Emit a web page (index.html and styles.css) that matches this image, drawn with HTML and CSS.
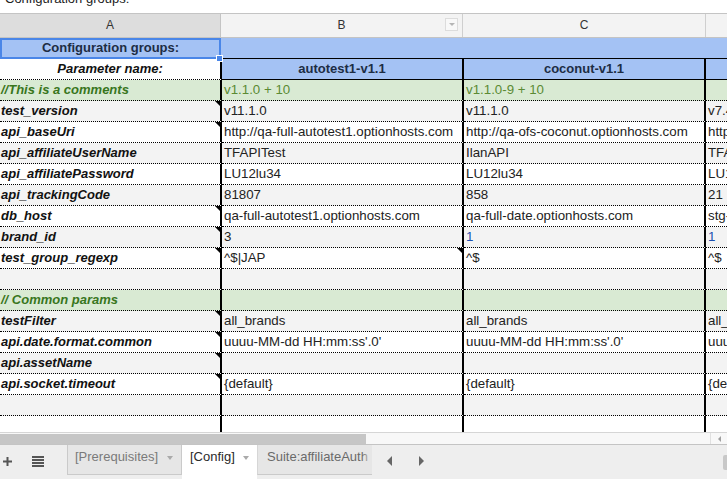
FILE: index.html
```html
<!DOCTYPE html>
<html>
<head>
<meta charset="utf-8">
<link rel="stylesheet" href="styles.css">
</head>
<body>
<div class="formula"><span>Configuration groups:</span></div>
<div class="colhead">
  <div class="ch ch-sel">A</div>
  <div class="ch">B<span class="filter"><span class="caret"></span></span></div>
  <div class="ch">C</div>
  <div class="ch ch-last"></div>
</div>
<div class="grid">
  <div class="c a blue sel bold center">Configuration groups:<span class="handle"></span></div>
  <div class="c blue span3 toprow"></div>

  <div class="c a white bi center">Parameter name:</div>
  <div class="c b blue bold center hdr">autotest1-v1.1</div>
  <div class="c b blue bold center hdr">coconut-v1.1</div>
  <div class="c d blue hdr"></div>

  <div class="c a green bi gtext">//This is a comments</div>
  <div class="c b green gval">v1.1.0 + 10</div>
  <div class="c b green gval">v1.1.0-9 + 10</div>
  <div class="c d green"></div>

  <div class="c a gray bi note">test_version</div>
  <div class="c b gray">v11.1.0</div>
  <div class="c b gray">v11.1.0</div>
  <div class="c d gray">v7.4.0</div>

  <div class="c a white bi note">api_baseUri</div>
  <div class="c b white">http://qa-full-autotest1.optionhosts.com</div>
  <div class="c b white">http://qa-ofs-coconut.optionhosts.com</div>
  <div class="c d white">http://stg.optionhosts.com</div>

  <div class="c a gray bi">api_affiliateUserName</div>
  <div class="c b gray">TFAPITest</div>
  <div class="c b gray">IlanAPI</div>
  <div class="c d gray">TFAPITest</div>

  <div class="c a white bi">api_affiliatePassword</div>
  <div class="c b white">LU12lu34</div>
  <div class="c b white">LU12lu34</div>
  <div class="c d white">LU12lu34</div>

  <div class="c a gray bi">api_trackingCode</div>
  <div class="c b gray">81807</div>
  <div class="c b gray">858</div>
  <div class="c d gray">21</div>

  <div class="c a white bi note">db_host</div>
  <div class="c b white">qa-full-autotest1.optionhosts.com</div>
  <div class="c b white">qa-full-date.optionhosts.com</div>
  <div class="c d white">stg-full.optionhosts.com</div>

  <div class="c a gray bi note">brand_id</div>
  <div class="c b gray">3</div>
  <div class="c b gray num">1</div>
  <div class="c d gray num">1</div>

  <div class="c a white bi note">test_group_regexp</div>
  <div class="c b white note">^$|JAP</div>
  <div class="c b white">^$</div>
  <div class="c d white">^$</div>

  <div class="c a gray"></div>
  <div class="c b gray"></div>
  <div class="c b gray"></div>
  <div class="c d gray"></div>

  <div class="c a green bi gtext">// Common params</div>
  <div class="c b green"></div>
  <div class="c b green"></div>
  <div class="c d green"></div>

  <div class="c a gray bi note">testFilter</div>
  <div class="c b gray">all_brands</div>
  <div class="c b gray">all_brands</div>
  <div class="c d gray">all_brands</div>

  <div class="c a white bi note">api.date.format.common</div>
  <div class="c b white">uuuu-MM-dd HH:mm:ss'.0'</div>
  <div class="c b white">uuuu-MM-dd HH:mm:ss'.0'</div>
  <div class="c d white">uuuu-MM-dd HH:mm:ss'.0'</div>

  <div class="c a gray bi note">api.assetName</div>
  <div class="c b gray"></div>
  <div class="c b gray"></div>
  <div class="c d gray"></div>

  <div class="c a white bi note">api.socket.timeout</div>
  <div class="c b white">{default}</div>
  <div class="c b white">{default}</div>
  <div class="c d white">{default}</div>

  <div class="c a gray"></div>
  <div class="c b gray"></div>
  <div class="c b gray"></div>
  <div class="c d gray"></div>

  <div class="c a white"></div>
  <div class="c b white"></div>
  <div class="c b white"></div>
  <div class="c d white"></div>
</div>
<div class="hscroll">
  <div class="thumb"></div>
  <div class="hs-end"><span class="hs-arrow"></span></div>
</div>
<div class="tabbar">
  <svg class="ic-plus" width="9" height="9" viewBox="0 0 9 9"><rect x="0" y="3.5" width="9" height="2" fill="#555"/><rect x="3.5" y="0" width="2" height="9" fill="#555"/></svg>
  <svg class="ic-menu" width="12" height="11" viewBox="0 0 12 11"><rect x="0" y="0" width="12" height="2" fill="#555"/><rect x="0" y="3" width="12" height="2" fill="#555"/><rect x="0" y="6" width="12" height="2" fill="#555"/><rect x="0" y="9" width="12" height="2" fill="#555"/></svg>
  <div class="tab tab-prereq">[Prerequisites]<span class="tcaret"></span></div>
  <div class="tab tab-active">[Config]<span class="tcaret"></span></div>
  <div class="tab tab-suite"><span class="tlabel">Suite:affiliateAuth</span><span class="fade"></span></div>
  <span class="arr arr-l"></span>
  <span class="arr arr-r"></span>
  <span class="spacer"></span>
  <span class="edge"></span>
</div>
</body>
</html>
```

FILE: styles.css
```css
html, body {
  margin: 0;
  padding: 0;
}
body {
  width: 727px;
  height: 479px;
  overflow: hidden;
  background: #fff;
  font-family: "Liberation Sans", Arial, sans-serif;
  font-size: 13px;
  color: #222;
}

.formula {
  height: 13px;
  border-bottom: 1px solid #c4c4c4;
  overflow: hidden;
  padding-left: 5px;
}
.formula span {
  display: block;
  margin-top: -8px;
  line-height: 13px;
  font-size: 13px;
  color: #222;
}

.colhead {
  display: grid;
  grid-template-columns: 221px 242px 243px 1fr;
  height: 23px;
  border-bottom: 1px solid #c4c4c4;
}
.ch {
  background: #f3f3f3;
  border-right: 1px solid #cfcfcf;
  text-align: center;
  line-height: 23px;
  font-size: 12px;
  color: #333;
  position: relative;
}
.ch-sel {
  background: #dddddd;
  border-right-color: #c4c4c4;
}
.ch-last {
  border-right: none;
}
.filter {
  position: absolute;
  right: 4px;
  top: 4px;
  width: 11px;
  height: 11px;
  border: 1px solid #dcdcdc;
  background: #f8f8f8;
  display: flex;
  align-items: center;
  justify-content: center;
}
.caret {
  width: 0;
  height: 0;
  border-left: 3px solid transparent;
  border-right: 3px solid transparent;
  border-top: 3px solid #b5b5b5;
}

.grid {
  display: grid;
  grid-template-columns: 222px 242px 242px 1fr;
  grid-auto-rows: 21px;
  height: 394px;
  overflow: hidden;
}
.c {
  box-sizing: border-box;
  height: 21px;
  border-bottom: 1px dotted #000;
  line-height: 20px;
  padding-left: 2px;
  white-space: nowrap;
  overflow: hidden;
  position: relative;
}
.a {
  border-right: 2px solid #000;
  padding-left: 1px;
}
.b {
  border-right: 2px solid #000;
  font-size: 13.3px;
}
.d {
  padding-left: 2px;
  font-size: 13.3px;
}
.white { background: #fff; }
.gray { background: #f3f3f3; }
.green { background: #d9ead3; }
.blue { background: #a4c2f4; }
.bold { font-weight: bold; font-size: 13px; }
.bi { font-weight: bold; font-style: italic; color: #111; }
.center { text-align: center; padding-left: 0; }
.gtext { color: #38761d; }
.gval { color: #5b8a34; }
.num { color: #1c4fb0; }

.sel {
  border-right: none;
  border-bottom: none;
  box-shadow: inset 0 0 0 2px #4a86e8;
  overflow: visible;
  color: #1d2d44;
  z-index: 2;
  width: 221px;
}
.handle {
  position: absolute;
  right: -2px;
  bottom: -3px;
  width: 5px;
  height: 5px;
  background: #4a86e8;
  border: 1px solid #fff;
}
.span3 {
  grid-column: 2 / 5;
  border-bottom: 1px solid #000;
}
.toprow { margin-left: -1px; }
.hdr {
  border-bottom: 1px solid #000;
  color: #1d2d44;
}

.note::after {
  content: "";
  position: absolute;
  top: 0;
  right: 0;
  width: 0;
  height: 0;
  border-top: 5px solid #000;
  border-left: 5px solid transparent;
}

.hscroll {
  height: 11px;
  border-top: 1px solid #d6d6d6;
  background: #f8f8f8;
  display: flex;
}
.thumb {
  width: 366px;
  height: 10px;
  margin-top: 1px;
  background: #c6c6c6;
}
.hs-end {
  margin-left: auto;
  width: 16px;
  border-left: 1px solid #e0e0e0;
  display: flex;
  align-items: center;
  justify-content: center;
}
.hs-arrow {
  width: 0;
  height: 0;
  border-top: 3px solid transparent;
  border-bottom: 3px solid transparent;
  border-right: 3px solid #a0a0a0;
}

.tabbar {
  height: 34px;
  border-top: 1px solid #c4c4c4;
  background: #eeeeee;
  display: flex;
  align-items: flex-start;
  font-size: 13px;
}
.ic-plus {
  margin-left: 3px;
  margin-top: 12px;
}
.ic-menu {
  margin-left: 20px;
  margin-top: 11px;
}
.tab {
  box-sizing: border-box;
  height: 30px;
  padding-top: 4px;
  line-height: 16px;
  display: flex;
  align-items: flex-start;
  white-space: nowrap;
  position: relative;
}
.tab-prereq {
  margin-left: 23px;
  width: 115px;
  padding-left: 7px;
  background: #e6e6e6;
  border: 1px solid #cacaca;
  border-top: none;
  color: #7a7a7a;
}
.tab-active {
  width: 75px;
  height: 34px;
  padding-left: 8px;
  background: #fff;
  color: #2a2a2a;
}
.tab-suite {
  width: 115px;
  padding-left: 9px;
  background: #e6e6e6;
  border-bottom: 1px solid #cacaca;
  border-left: 1px solid #d6d6d6;
  color: #6a6a6a;
  overflow: hidden;
}
.tlabel { overflow: hidden; }
.fade {
  position: absolute;
  right: 0;
  top: 0;
  width: 10px;
  height: 100%;
  background: linear-gradient(to right, rgba(230,230,230,0), #e6e6e6);
}
.tcaret {
  margin-left: auto;
  margin-right: 8px;
  margin-top: 7px;
  width: 0;
  height: 0;
  border-left: 3.5px solid transparent;
  border-right: 3.5px solid transparent;
  border-top: 4px solid #aaa;
}
.arr {
  width: 0;
  height: 0;
  margin-top: 11px;
  border-top: 5px solid transparent;
  border-bottom: 5px solid transparent;
}
.arr-l {
  margin-left: 15px;
  border-right: 5px solid #666;
}
.arr-r {
  margin-left: 27px;
  border-left: 5px solid #666;
}
.spacer { flex: 1; }
.edge {
  width: 4px;
  height: 15px;
  margin-top: 10px;
  background: #c8c8c8;
  border-radius: 2px 0 0 2px;
}
```
